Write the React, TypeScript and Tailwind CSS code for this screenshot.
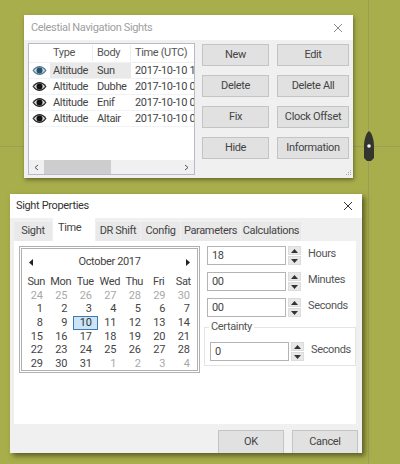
const rows = [
  { body: "Sun", time: "2017-10-10 1", active: true },
  { body: "Dubhe", time: "2017-10-10 0" },
  { body: "Enif", time: "2017-10-10 0" },
  { body: "Altair", time: "2017-10-10 0" },
];

const buttons = ["New", "Edit", "Delete", "Delete All", "Fix", "Clock Offset", "Hide", "Information"];
const tabs = [
  { name: "Sight", width: "w-[38px]" },
  { name: "Time", width: "w-[42px]" },
  { name: "DR Shift", width: "w-[44px]" },
  { name: "Config", width: "w-[39px]" },
  { name: "Parameters", width: "w-[59px]" },
  { name: "Calculations", width: "w-[60px]" },
];
const dayNames = ["Sun", "Mon", "Tue", "Wed", "Thu", "Fri", "Sat"];
const weeks = [
  [24, 25, 26, 27, 28, 29, 30],
  [1, 2, 3, 4, 5, 6, 7],
  [8, 9, 10, 11, 12, 13, 14],
  [15, 16, 17, 18, 19, 20, 21],
  [22, 23, 24, 25, 26, 27, 28],
  [29, 30, 31, 1, 2, 3, 4],
];

const Eye = ({ blue }: { blue?: boolean }) => (
  <svg width="15" height="9" viewBox="0 0 15 9">
    <path d="M0.5 4.5C3 1 5 0 7.5 0S12 1 14.5 4.5C12 8 10 9 7.5 9S3 8 0.5 4.5Z" fill={blue ? "#4f7f9c" : "#2b2b2b"} />
    <path d="M2 4.5C3.5 2.5 5 1.5 7.5 1.5S11.5 2.5 13 4.5C11.5 6.5 10 7.5 7.5 7.5S3.5 6.5 2 4.5Z" fill="#d8d8d8" />
    <circle cx="7.5" cy="4.5" r="3" fill={blue ? "#27506b" : "#111111"} />
  </svg>
);

const CloseIcon = ({ color }: { color: string }) => (
  <svg width="10" height="10" viewBox="0 0 10 10">
    <path d="M1 1L9 9M9 1L1 9" stroke={color} strokeWidth="1" fill="none" />
  </svg>
);

const Spinner = () => (
  <div className="flex flex-col w-[13px] h-[19px] gap-px">
    <div className="flex-1 flex items-center justify-center bg-[#e8e8e8] border border-[#dcdcdc]">
      <svg width="7" height="4" viewBox="0 0 7 4"><path d="M3.5 0L7 4H0Z" fill="#333333" /></svg>
    </div>
    <div className="flex-1 flex items-center justify-center bg-[#e8e8e8] border border-[#dcdcdc]">
      <svg width="7" height="4" viewBox="0 0 7 4"><path d="M0 0H7L3.5 4Z" fill="#333333" /></svg>
    </div>
  </div>
);

const NumberField = ({ value, label }: { value: string; label: string }) => (
  <div className="flex items-center h-[19px]">
    <div className="w-[79px] h-[19px] border border-[#b4b4b4] bg-white pl-[4px] leading-[18px] text-[#444444]">{value}</div>
    <div className="ml-[2px]"><Spinner /></div>
    <span className="ml-[7px] -mt-[3px] text-[#555555]">{label}</span>
  </div>
);

export default function App() {
  return (
    <div className="relative w-[400px] h-[464px] overflow-hidden bg-[#a9ae4c] text-[11px] tracking-[-0.35px] font-['Roboto',sans-serif] text-[#444444]">
      {/* chart grid lines and own ship */}
      <div className="absolute left-0 top-[146px] w-[400px] h-px bg-[#9a9f58]" />
      <div className="absolute left-[368px] top-0 w-px h-[464px] bg-[#9a9f58]" />
      <svg className="absolute left-[363px] top-[130px]" width="12" height="32" viewBox="0 0 12 32">
        <path d="M6 1C9 3 11 10 11 16V28L8 31H4L1 28V16C1 10 3 3 6 1Z" fill="#35352f" />
        <circle cx="6" cy="16" r="1.8" fill="#f4f4f4" />
      </svg>

      {/* sights window */}
      <div className="absolute left-[24px] top-[15px] w-[329px] h-[163px] flex flex-col bg-[#f0f0f0] shadow-[1px_2px_4px_rgba(60,60,20,0.6)]">
        <div className="h-[25px] shrink-0 bg-white flex items-center justify-between pl-[7px] pr-[10px] pt-px text-[#a0a0a0]">
          <span>Celestial Navigation Sights</span>
          <CloseIcon color="#8c8c8c" />
        </div>
        <div className="relative flex-1 flex pl-[4px] pt-[3px]">
          <div className="w-[167px] h-[132px] flex flex-col border border-[#b5bcc6] bg-white overflow-hidden whitespace-nowrap">
            <div className="flex h-[19px] items-center border-b border-[#f0f0f0] text-[#555555]">
              <span className="w-[21px] shrink-0" />
              <span className="w-[43px] shrink-0 pl-[3px] border-r border-[#eeeeee]">Type</span>
              <span className="w-[38px] shrink-0 pl-[4px] border-r border-[#eeeeee]">Body</span>
              <span className="shrink-0 pl-[4px]">Time (UTC)</span>
            </div>
            {rows.map((row) => (
              <div key={row.body} className="flex h-[16px] items-center border-b border-[#f2f2f2]">
                <span className="w-[21px] shrink-0 pl-[3px] flex"><Eye blue={row.active} /></span>
                <span className={row.active ? "flex w-[81px] h-[15px] leading-[16px] shrink-0 bg-[#e9e9e9]" : "flex w-[81px] h-[15px] leading-[16px] shrink-0"}>
                  <span className="w-[43px] shrink-0 pl-[3px]">Altitude</span>
                  <span className="w-[38px] shrink-0 pl-[4px]">{row.body}</span>
                </span>
                <span className="shrink-0 pl-[4px] leading-[16px]">{row.time}</span>
              </div>
            ))}
            <div className="flex-1" />
            <div className="h-[14px] flex items-center bg-[#f0f0f0]">
              <span className="w-[15px] flex justify-center">
                <svg width="5" height="7" viewBox="0 0 5 7"><path d="M4 1L1 3.5L4 6" stroke="#555555" fill="none" /></svg>
              </span>
              <span className="w-[67px] h-[14px] bg-[#cdcdcd]" />
              <span className="flex-1" />
              <span className="w-[15px] flex justify-center">
                <svg width="5" height="7" viewBox="0 0 5 7"><path d="M1 1L4 3.5L1 6" stroke="#555555" fill="none" /></svg>
              </span>
            </div>
          </div>
          <div className="ml-[7px] mt-[1px] grid grid-cols-[67px_72px] auto-rows-[22px] gap-x-[8px] gap-y-[9px] self-start">
            {buttons.map((b) => (
              <div key={b} className="flex items-center justify-center pt-px border border-[#c4c4c4] bg-[#e1e1e1] text-[#444444]">{b}</div>
            ))}
          </div>
          <svg className="absolute right-[1px] bottom-[1px]" width="8" height="8" viewBox="0 0 8 8">
            <path d="M6 1h1v1H6zM4 3h1v1H4zM6 3h1v1H6zM2 5h1v1H2zM4 5h1v1H4zM6 5h1v1H6z" fill="#a8a8a8" />
          </svg>
        </div>
      </div>

      {/* properties dialog */}
      <div className="absolute left-[10px] top-[194px] w-[352px] h-[259px] flex flex-col bg-[#f0f0f0] shadow-[3px_3px_5px_rgba(60,60,20,0.7)]">
        <div className="h-[24px] shrink-0 bg-white flex items-center justify-between pl-[6px] pr-[9px] text-[#333333]">
          <span>Sight Properties</span>
          <CloseIcon color="#333333" />
        </div>
        <div className="flex h-[23px] items-end px-[4px] gap-px text-[#444444]">
          {tabs.map((t) =>
            t.name === "Time" ? (
              <div key={t.name} className={`${t.width} h-[23px] bg-white pl-[5px] pt-[2px]`}>{t.name}</div>
            ) : (
              <div key={t.name} className={`${t.width} h-[19px] bg-[#e9e9e9] flex items-center justify-center whitespace-nowrap`}>{t.name}</div>
            ),
          )}
        </div>
        <div className="ml-[4px] mr-[6px] h-[183px] bg-white flex pt-[5px] pl-[5px]">
          <div className="w-[181px] h-[127px] border border-[#b0b0b0] p-px">
            <div className="h-full border border-[#b0b0b0] px-[1px] flex flex-col">
              <div className="h-[26px] shrink-0 flex items-center justify-between px-[6px]">
                <svg width="4" height="7" viewBox="0 0 4 7"><path d="M4 0V7L0 3.5Z" fill="#222222" /></svg>
                <span className="text-[#444444]">October 2017</span>
                <svg width="4" height="7" viewBox="0 0 4 7"><path d="M0 0V7L4 3.5Z" fill="#222222" /></svg>
              </div>
              <div className="grid grid-cols-[repeat(7,24.5px)] auto-rows-[13.7px] leading-[13.7px] pl-[1px] text-[#444444]">
                {dayNames.map((d) => (
                  <div key={d} className="text-center">{d}</div>
                ))}
                {weeks.map((week, w) =>
                  week.map((d, i) => {
                    const faded = (w === 0) || (w === 5 && i > 2);
                    const selected = w === 2 && d === 10;
                    return (
                      <div
                        key={`${w}-${i}`}
                        className={
                          selected
                            ? "text-right pr-[5px] bg-[#cbe4f8] border border-[#3d7ab0] leading-[12px] text-[#333333]"
                            : faded
                              ? "text-right pr-[6px] text-[#a8a8a8]"
                              : "text-right pr-[6px]"
                        }
                      >
                        {d}
                      </div>
                    );
                  }),
                )}
              </div>
            </div>
          </div>
          <div className="ml-[7px] flex flex-col">
            <div className="flex flex-col gap-[7px]">
              <NumberField value="18" label="Hours" />
              <NumberField value="00" label="Minutes" />
              <NumberField value="00" label="Seconds" />
            </div>
            <div className="relative -ml-[3px] mt-[10px] w-[152px] h-[39px] border border-[#e4e4e4] pl-[5px] pt-[14px]">
              <span className="absolute left-[4px] -top-[9px] bg-white px-[2px] text-[#555555]">Certainty</span>
              <NumberField value="0" label="Seconds" />
            </div>
          </div>
        </div>
        <div className="flex-1 flex justify-end items-end gap-[8px] pr-[4px]">
          <div className="w-[66px] h-[23px] flex items-center justify-center bg-[#e1e1e1] border border-[#c4c4c4] border-b-0">OK</div>
          <div className="w-[66px] h-[23px] flex items-center justify-center bg-[#e1e1e1] border border-[#c4c4c4] border-b-0">Cancel</div>
        </div>
      </div>
    </div>
  );
}
